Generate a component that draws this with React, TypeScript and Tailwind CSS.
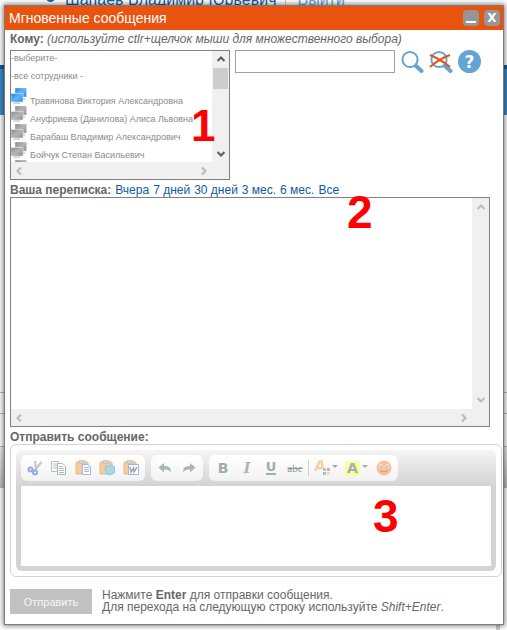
import type { ReactNode } from "react";

const people = [
  { name: "Травянова Виктория Александровна", online: true },
  { name: "Ануфриева (Данилова) Алиса Львовна", online: false },
  { name: "Барабаш Владимир Александрович", online: false },
  { name: "Бойчук Степан Васильевич", online: false },
  { name: "", online: false },
];

const periods = ["Вчера", "7 дней", "30 дней", "3 мес.", "6 мес.", "Все"];

function Chevron({ turn, color = "#bdbdbd" }: { turn: string; color?: string }) {
  return (
    <svg className={`block size-2 ${turn}`} viewBox="0 0 8 8" aria-hidden="true">
      <path d="M0.500 6 4 2.500 7.500 6" fill="none" stroke={color} strokeWidth="2.200" />
    </svg>
  );
}

function Monitors({ online }: { online: boolean }) {
  const id = online ? "screen-on" : "screen-off";
  return (
    <svg className="block h-[18px] w-4 shrink-0" viewBox="0 0 16 18" aria-hidden="true">
      <defs>
        <linearGradient id={id} x1="0" y1="0" x2="1" y2="1">
          <stop offset="0" stopColor={online ? "#1b82e0" : "#8a8a8a"} />
          <stop offset="0.5" stopColor={online ? "#5db5fb" : "#b5b5b5"} />
          <stop offset="1" stopColor={online ? "#2090f5" : "#8d8d8d"} />
        </linearGradient>
      </defs>
      <path d="M9 10h5v2H9zM3 14h6v2H2z" fill="#d5d5d5" />
      <rect x="4" y="0" width="11.500" height="9" fill={`url(#${id})`} stroke="#e0e0e0" strokeWidth="0.5" />
      <rect x="0" y="5.500" width="12" height="8.500" fill={`url(#${id})`} stroke="#e8e8e8" strokeWidth="0.6" />
    </svg>
  );
}

function Magnifier({ crossed }: { crossed?: boolean }) {
  return (
    <svg className="block size-6" viewBox="0 0 24 24" aria-hidden="true">
      <path d="m15.500 15.500 6 5.500" stroke="#64a3d6" strokeWidth="4" strokeLinecap="round" />
      <circle cx="10" cy="9.500" r="7.600" fill="#fff" stroke="#64a3d6" strokeWidth="2" />
      {crossed && <path d="M1 5c7 3 14 7 20 12M1 17C7 12 14 7 21 5" fill="none" stroke="#e8520f" strokeWidth="2" />}
    </svg>
  );
}

function Tool({ label, children, wide }: { label: string; children: ReactNode; wide?: boolean }) {
  return (
    <button type="button" aria-label={label} className={`flex h-[26px] items-center justify-center ${wide ? "w-[31px]" : "w-6"}`}>
      {children}
    </button>
  );
}

function Icon({ children }: { children: ReactNode }) {
  return (
    <svg className="block size-4" viewBox="0 0 16 16" fill="none" aria-hidden="true">
      {children}
    </svg>
  );
}

function Clipboard() {
  return (
    <>
      <rect x="1" y="2" width="12" height="12" rx="1" fill="#f5cb9c" stroke="#e6b888" />
      <rect x="4" y="0.500" width="6" height="3" rx="1" fill="#d9d4cd" stroke="#bdb6ad" strokeWidth="0.700" />
    </>
  );
}

function Caret() {
  return (
    <svg className="mb-1 block h-[3px] w-1.5" viewBox="0 0 6 3" aria-hidden="true">
      <path d="M0 0h6L3 3z" fill="#a8a8a8" />
    </svg>
  );
}

function Toolbar() {
  const group = "flex items-center rounded-md bg-gradient-to-b from-white to-[#f2f2f2] px-[2px]";
  return (
    <div role="toolbar" aria-label="Форматирование" className="flex gap-1.5 pb-[5px]">
      <div className={group}>
        <Tool label="Вырезать">
          <Icon>
            <path d="m14.500 2-7 8.500M8 1l1 9" stroke="#c4cacb" strokeWidth="2.200" />
            <circle cx="3.500" cy="9.500" r="2" stroke="#96a9e6" strokeWidth="2" />
            <circle cx="8" cy="12.500" r="2" stroke="#96a9e6" strokeWidth="2" />
          </Icon>
        </Tool>
        <Tool label="Копировать">
          <Icon>
            <path d="M0.500 1.500h7v10h-7z" fill="#fff" stroke="#b7c0c1" />
            <path d="M2 4h4M2 6h4M2 8h4" stroke="#b7c0c1" />
            <path d="M6.500 3.500h5l3 3v8h-8z" fill="#fff" stroke="#a9b5b6" />
            <path d="M8 6.500h4M8 8.500h5M8 10.500h5M8 12.500h5" stroke="#b0bbbc" />
          </Icon>
        </Tool>
        <Tool label="Вставить">
          <Icon>
            <Clipboard />
            <path d="M7.500 4.500h5l3 2v8h-8z" fill="#fff" stroke="#a3b3ea" />
            <path d="M9 7.500h5M9 9.500h5M9 11.500h5" stroke="#a3b3ea" />
          </Icon>
        </Tool>
        <Tool label="Вставить только текст">
          <Icon>
            <Clipboard />
            <path d="m6 7 7-2 2.500 2v6l-4 2-4-1z" fill="#a5d8ec" stroke="#94c5dc" />
          </Icon>
        </Tool>
        <Tool label="Вставить из Word">
          <Icon>
            <Clipboard />
            <path d="M5.500 4.500h10v10h-10z" fill="#fff" stroke="#a3b3ea" />
            <path d="m7 7 1 5 2.500-4 .5 4L14 7" stroke="#a2a9ad" strokeWidth="1.500" />
          </Icon>
        </Tool>
      </div>
      <div className={group}>
        <Tool label="Отменить">
          <Icon>
            <path d="M7 3v3c5 0 7 2 7 6-2-2-4-2.500-7-2.500v3L1.500 7.500z" fill="#a9b5b8" />
          </Icon>
        </Tool>
        <Tool label="Повторить">
          <Icon>
            <path d="M9 3v3c-5 0-7 2-7 6 2-2 4-2.500 7-2.500v3l5.500-5z" fill="#a9b5b8" />
          </Icon>
        </Tool>
      </div>
      <div className={group}>
        <Tool label="Полужирный"><b className="font-['DejaVu_Sans','Liberation_Sans',sans-serif] text-[14px] text-[#a0adb0]">B</b></Tool>
        <Tool label="Курсив"><i className="font-['DejaVu_Serif','Liberation_Serif',serif] text-[14px] font-bold text-[#a9b5b8]">I</i></Tool>
        <Tool label="Подчеркнутый"><b className="border-b-2 border-[#a0adb0] font-['DejaVu_Sans','Liberation_Sans',sans-serif] text-[13px] leading-3 text-[#a0adb0]">U</b></Tool>
        <Tool label="Зачеркнутый"><s className="font-['Liberation_Serif',serif] text-[11px] text-[#8c9698]">abc</s></Tool>
        <span className="mx-px h-4 w-px bg-[#cfcfcf]" />
        <Tool label="Цвет текста" wide>
          <svg className="mr-0.5 block size-4" viewBox="0 0 16 16" aria-hidden="true">
            <path d="m1 11 4.500-9.500h2L9 9M3 8h6" fill="none" stroke="#f8cfa0" strokeWidth="2.500" />
            <path d="M9 8h3v3H9z" fill="#a6d5a0" />
            <path d="M13 8h3v3h-3z" fill="#f2a3a3" />
            <path d="M9 12h3v3H9z" fill="#9bbcf0" />
            <path d="M13 12h3v3h-3z" fill="#f7dfa0" />
          </svg>
          <Caret />
        </Tool>
        <Tool label="Цвет фона" wide>
          <b className="mr-0.5 flex h-[15px] w-[15px] items-center justify-center bg-[#fbfba4] font-['DejaVu_Sans','Liberation_Sans',sans-serif] text-[14px] text-[#a0adb0]">A</b>
          <Caret />
        </Tool>
        <Tool label="Смайлы">
          <Icon>
            <circle cx="8" cy="8" r="7" fill="#f8c49c" stroke="#f3b48c" strokeWidth="0.800" />
            <path d="M3 6.500c1-3 3-3 4 0zM9 6.500c1-3 3-3 4 0z" fill="#fff" />
            <path d="M4.500 6h1.500M10 6h1.500" stroke="#777" />
            <path d="M4 10c2 2.500 6 2.500 8 0" stroke="#c78f73" />
          </Icon>
        </Tool>
      </div>
    </div>
  );
}

function PageBehind() {
  return (
    <div aria-hidden="true" className="absolute inset-0 -z-10 overflow-hidden bg-white">
      <div className="flex h-[65px] items-start gap-2 pl-[46px]">
        <span className="mt-[-7px] size-[9px] rounded-full bg-[#1a62a8]" />
        <div className="-mt-2.5 flex gap-2 text-[16px] leading-5 text-[#1a5fa5]">
          <span className="pl-0.5">Шапаев Владимир Юрьевич</span>
          <span className="border-l border-[#ccc] pl-3 text-[#6aa5d8]">Выйти</span>
        </div>
      </div>
      <div className="h-[50px] border-t-4 border-[#165a9d] bg-[#3b8ac8]" />
      <div className="mt-[277px] h-[22px] border-y border-[#bbb]" />
      <div className="mt-8 h-[42px] border-t border-[#bbb] bg-gradient-to-b from-[#eee] to-[#bbb]" />
      <div className="mr-[7px] h-48 border-r-4 border-[#ccc]" />
    </div>
  );
}

export default function App() {
  return (
    <div className="relative isolate overflow-hidden px-1 pt-[5px] pb-[5px] font-['Liberation_Sans',Arial,sans-serif] text-[12px] leading-3 text-[#666]">
      <PageBehind />
      <section
        role="dialog"
        aria-labelledby="title"
        className="relative mr-[-1px] border border-[#7b7b7b] bg-white shadow-[0_0_5px_1px_rgba(0,0,0,0.5)]"
      >
        <header className="flex h-6 items-center justify-between bg-[#e95310] pr-[3px] pl-1 text-white">
          <h1 id="title" className="text-[14px] leading-4">Мгновенные сообщения</h1>
          <div className="flex gap-[5px]">
            <button type="button" aria-label="Свернуть" className="flex size-4 items-end justify-center rounded-sm bg-[#969696] pb-[3px]">
              <span className="h-0.5 w-2.5 bg-white" />
            </button>
            <button type="button" aria-label="Закрыть" className="size-4 rounded-sm bg-[#969696] font-['DejaVu_Sans',sans-serif] text-[12px] leading-4 font-bold">X</button>
          </div>
        </header>

        <div className="px-[5px]">
          <p className="pt-px leading-4">
            <b>Кому:</b> <i>(используйте ctlr+щелчок мыши для множественного выбора)</i>
          </p>

          <div className="mt-[3px] flex items-start gap-[5px]">
            <div className="flex h-[130px] w-[220px] flex-col border border-[#808080]">
              <div className="flex min-h-0 flex-1">
                <ul role="listbox" aria-label="Кому" aria-multiselectable="true" className="h-full min-w-0 flex-1 overflow-hidden whitespace-nowrap text-[9px] leading-[18px] text-[#8b8b8b]">
                  <li role="option" aria-selected="false" className="-mt-0.5">-выберите-</li>
                  <li role="option" aria-selected="false">-все сотрудники -</li>
                  {people.map((p, i) => (
                    <li key={i} role="option" aria-selected="false" className="flex h-[18px] items-start gap-[3px] nth-[3]:mt-[3px]">
                      <Monitors online={p.online} />
                      {p.name && <span className="pt-1">{p.name}</span>}
                    </li>
                  ))}
                </ul>
                <div className="flex w-[17px] flex-col items-center justify-between bg-[#f0f0f0] pt-1 pb-1">
                  <div className="flex flex-col items-center gap-[5px]">
                    <Chevron turn="" color="#606060" />
                    <span className="h-[21px] w-[15px] bg-[#cdcdcd]" />
                  </div>
                  <Chevron turn="rotate-180" color="#606060" />
                </div>
              </div>
              <div className="flex h-[17px] items-center justify-between bg-[#f0f0f0] pr-[21px] pl-1">
                <Chevron turn="-rotate-90" />
                <Chevron turn="rotate-90" />
              </div>
            </div>
            <input type="text" aria-label="Поиск сотрудника" className="h-[23px] w-[160px] border border-[#a0a0a8] bg-white px-1" />
            <button type="button" aria-label="Найти"><Magnifier /></button>
            <button type="button" aria-label="Сбросить поиск"><Magnifier crossed /></button>
            <button type="button" aria-label="Справка" className="flex size-[23px] items-center justify-center rounded-full bg-[#64a3d6] font-['DejaVu_Sans',sans-serif] text-[17px] font-bold text-white">?</button>
          </div>

          <div className="flex gap-1 pt-1 leading-[13px]">
            <b>Ваша переписка:</b>
            <nav className="flex gap-1 text-[#0f5ba4]">
              {periods.map((p) => (
                <a key={p} href="#">{p}</a>
              ))}
            </nav>
          </div>

          <div className="mr-2 flex h-[230px] flex-col border border-[#808080]">
            <div className="flex flex-1">
              <div className="flex-1" />
              <div className="flex w-[17px] flex-col items-center justify-between bg-[#f0f0f0] py-[5px]">
                <Chevron turn="" />
                <Chevron turn="rotate-180" />
              </div>
            </div>
            <div className="flex h-[17px] items-center justify-between bg-[#f0f0f0] pr-[21px] pl-1">
              <Chevron turn="-rotate-90" />
              <Chevron turn="rotate-90" />
            </div>
          </div>

          <label htmlFor="message" className="block pt-1 leading-[13px] font-bold">Отправить сообщение:</label>
          <div className="mr-[-4px] rounded-md border border-[#d3d3d3] p-[5px]">
            <div className="rounded-md bg-[#d3d3d3] bg-gradient-to-b from-[#f5f5f5] from-0% via-[#d3d3d3] via-30% to-[#d3d3d3] p-[5px]">
              <Toolbar />
              <textarea id="message" className="block h-20 w-full resize-none bg-white p-1 outline-none" />
            </div>
          </div>

          <div className="flex items-start gap-2.5 pt-3 pb-2.5">
            <button type="button" className="h-[25px] w-[82px] bg-[#c1c1c1] text-[11px] text-[#f7f7f7]">Отправить</button>
            <p className="leading-3">
              Нажмите <b>Enter</b> для отправки сообщения.
              <br />
              Для перехода на следующую строку используйте <i>Shift+Enter</i>.
            </p>
          </div>
        </div>
      </section>

      <span className="absolute top-[106px] left-[191px] text-[44px] leading-10 font-bold text-[#f00]">1</span>
      <span className="absolute top-[192px] left-[347px] text-[46px] leading-10 font-bold text-[#f00]">2</span>
      <span className="absolute top-[496px] left-[373px] text-[46px] leading-10 font-bold text-[#f00]">3</span>
    </div>
  );
}
